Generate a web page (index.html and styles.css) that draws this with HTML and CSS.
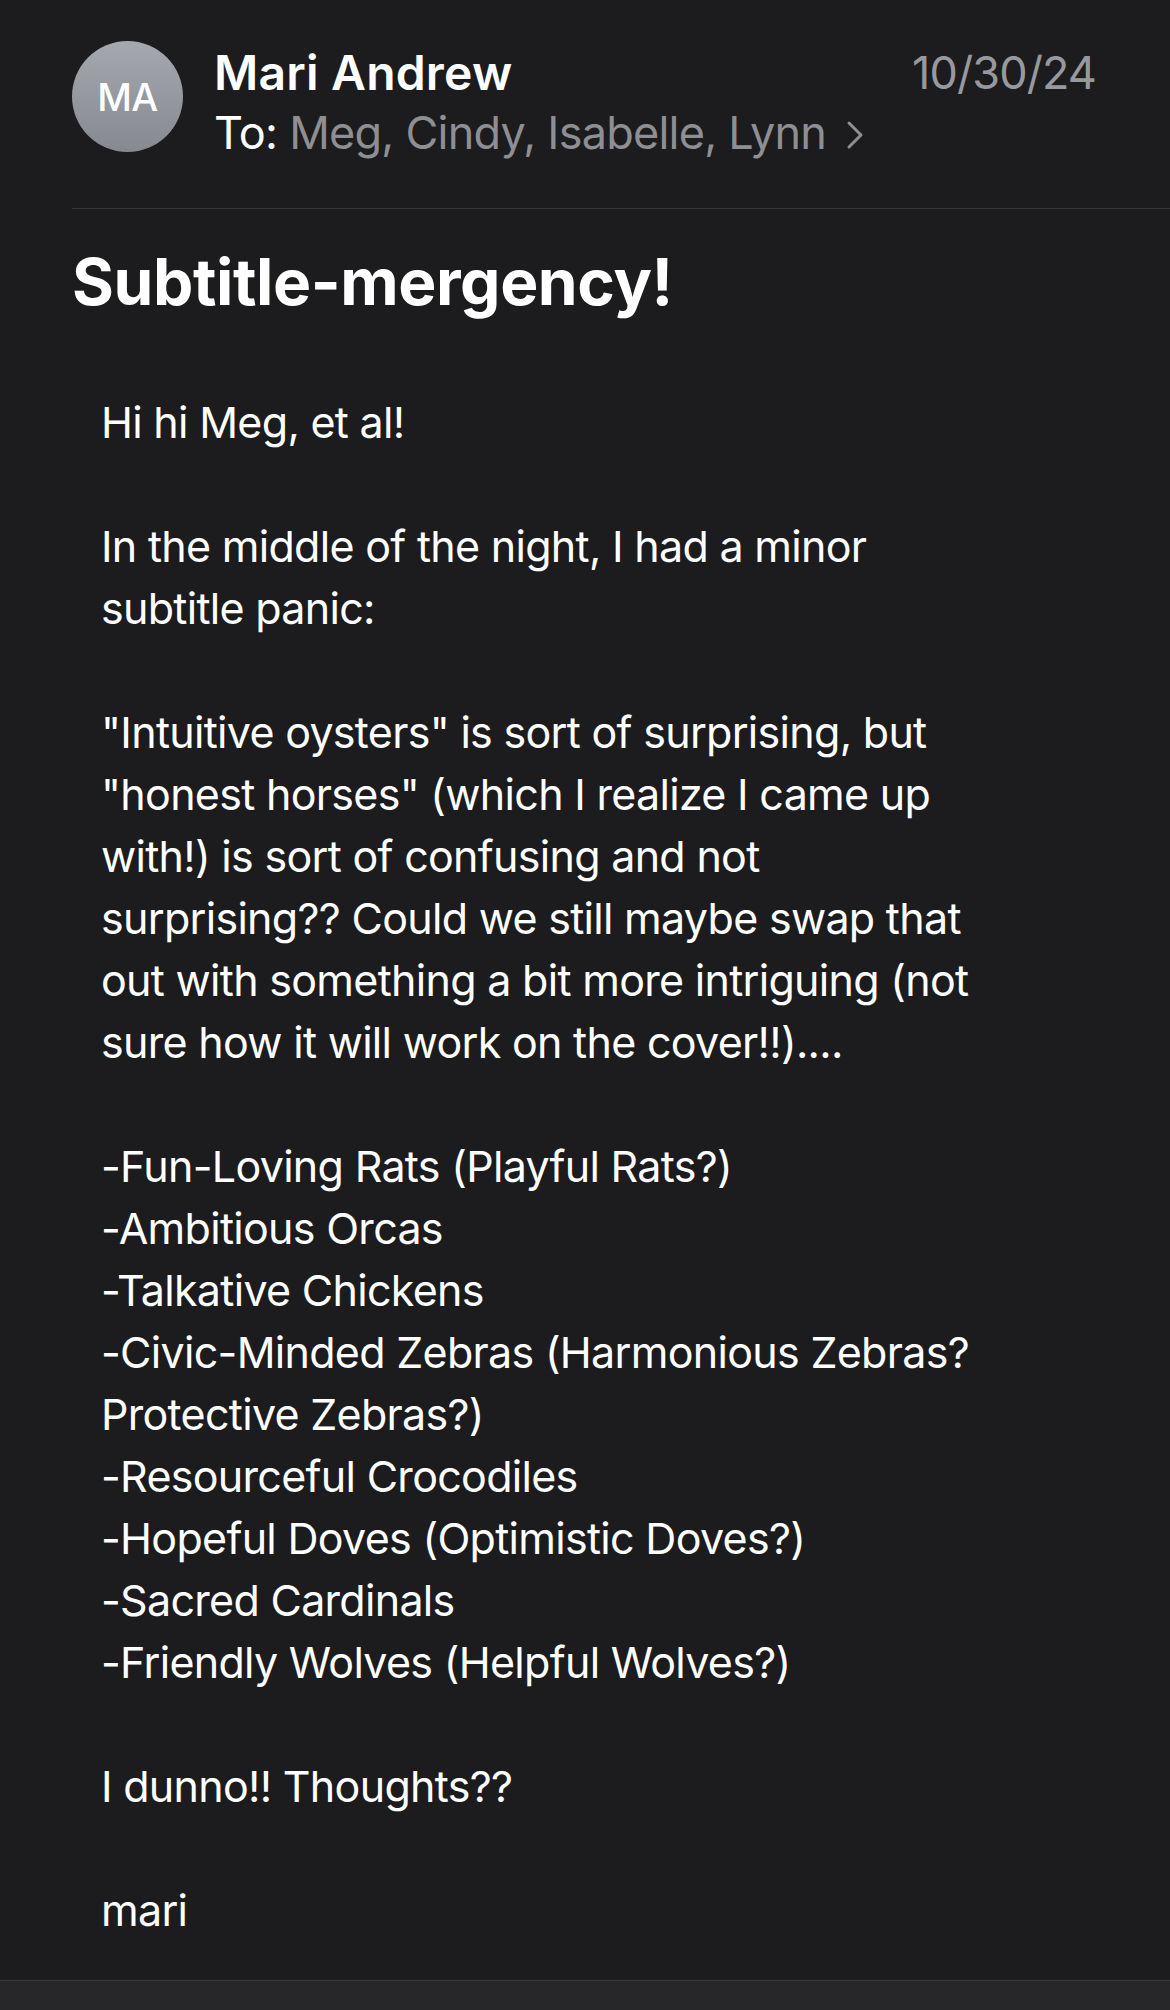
FILE: index.html
```html
<!DOCTYPE html>
<html lang="en">
<head>
<meta charset="utf-8">
<title>Subtitle-mergency!</title>
<link rel="stylesheet" href="styles.css">
</head>
<body>
<div class="screen">
  <header class="header">
    <div class="avatar">MA</div>
    <div class="info">
      <div class="sender">Mari Andrew</div>
      <div class="recipients"><span class="to">To:</span>&nbsp;<span class="names">Meg, Cindy, Isabelle, Lynn</span><svg class="chevron" width="18" height="30" viewBox="0 0 18 30"><polyline points="3,3 15,15 3,27" fill="none" stroke="#8e8e93" stroke-width="3" stroke-linecap="round" stroke-linejoin="round"/></svg></div>
    </div>
    <div class="date">10/30/24</div>
  </header>
  <div class="separator"></div>
  <h1 class="subject">Subtitle-mergency!</h1>
  <div class="message">
    <p>Hi hi Meg, et al!</p>
    <p>In the middle of the night, I had a minor<br>subtitle panic:</p>
    <p>"Intuitive oysters" is sort of surprising, but<br>"honest horses" (which I realize I came up<br>with!) is sort of confusing and not<br>surprising?? Could we still maybe swap that<br>out with something a bit more intriguing (not<br>sure how it will work on the cover!!)....</p>
    <p>-Fun-Loving Rats (Playful Rats?)<br>-Ambitious Orcas<br>-Talkative Chickens<br>-Civic-Minded Zebras (Harmonious Zebras?<br>Protective Zebras?)<br>-Resourceful Crocodiles<br>-Hopeful Doves (Optimistic Doves?)<br>-Sacred Cardinals<br>-Friendly Wolves (Helpful Wolves?)</p>
    <p>I dunno!! Thoughts??</p>
    <p>mari</p>
  </div>
  <div class="toolbar"></div>
</div>
</body>
</html>
```

FILE: styles.css
```css
html, body {
  margin: 0;
  padding: 0;
  background: #1c1c1e;
}

.screen {
  width: 1170px;
  height: 2010px;
  overflow: hidden;
  background: #1c1c1e;
  color: #ffffff;
  font-family: Inter, "Noto Sans", "Liberation Sans", sans-serif;
  display: flex;
  flex-direction: column;
}

.header {
  display: flex;
  align-items: flex-start;
  padding: 41px 74px 0 72px;
}

.avatar {
  width: 111px;
  height: 111px;
  border-radius: 50%;
  background: linear-gradient(180deg, #a6a8b0 0%, #878990 100%);
  color: #ffffff;
  font-size: 38px;
  font-weight: 500;
  display: flex;
  align-items: center;
  justify-content: center;
  letter-spacing: -0.5px;
  flex: none;
}

.info {
  margin-left: 31px;
  flex: 1;
}

.sender {
  font-size: 48px;
  font-weight: 600;
  line-height: 63px;
  letter-spacing: 0.2px;
}

.recipients {
  font-size: 45px;
  line-height: 58px;
  letter-spacing: -0.75px;
  display: flex;
  align-items: center;
  white-space: nowrap;
}

.to {
  color: #ffffff;
}

.names {
  color: #8e8e93;
}

.chevron {
  margin-left: 20px;
  margin-top: 4px;
}

.date {
  font-size: 45px;
  line-height: 63px;
  color: #98989f;
  letter-spacing: -0.9px;
}

.separator {
  height: 1px;
  background: #38383a;
  margin: 46px 0 0 72px;
}

.subject {
  margin: 35px 0 0 72px;
  font-size: 64px;
  font-weight: 700;
  line-height: 76px;
  letter-spacing: -0.4px;
}

.message {
  margin: 71px 0 0 101px;
  font-size: 43px;
  line-height: 62px;
  letter-spacing: -0.7px;
  white-space: nowrap;
}

.message p {
  margin: 0 0 62px 0;
}

.message p:last-child {
  margin-bottom: 0;
}

.toolbar {
  margin-top: auto;
  height: 29px;
  border-top: 1px solid #3a3a3c;
  background: #272729;
  flex: none;
}
```
